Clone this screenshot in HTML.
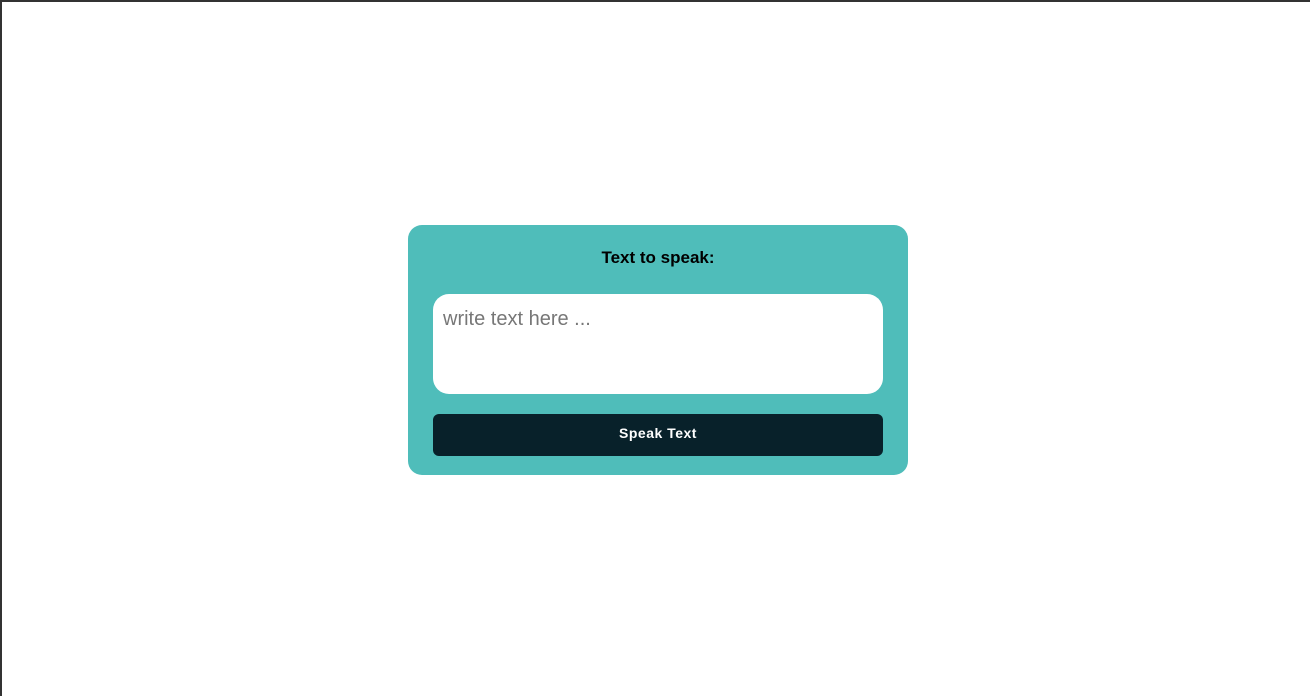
<!DOCTYPE html>
<html><head><style>
html,body{margin:0;padding:0;}
body{width:1310px;height:696px;overflow:hidden;background:#fff;position:relative;font-family:"Liberation Sans",sans-serif;}
.bt{position:absolute;left:0;top:0;width:1310px;height:2px;background:#333;}
.bl{position:absolute;left:0;top:0;width:2px;height:696px;background:#333;}
.card{position:absolute;left:408px;top:225px;width:500px;height:250px;background:#4fbdba;border-radius:14px;}
.title{position:absolute;left:0;width:500px;top:23px;text-align:center;font-weight:bold;font-size:17px;color:#000;}
.ta{position:absolute;left:25px;top:69px;width:450px;height:100px;background:#fff;border-radius:16px;}
.ph{position:absolute;left:10px;top:14px;font-size:20px;color:#777;}
.btn{position:absolute;left:25px;top:189px;width:450px;height:42px;background:#08212a;border-radius:6px;color:#fff;font-weight:bold;font-size:14px;letter-spacing:0.5px;text-align:center;line-height:39px;}
</style></head><body>
<div class="bt"></div><div class="bl"></div>
<div class="card">
<div class="title">Text to speak:</div>
<div class="ta"><div class="ph">write text here ...</div></div>
<div class="btn">Speak Text</div>
</div>
</body></html>
